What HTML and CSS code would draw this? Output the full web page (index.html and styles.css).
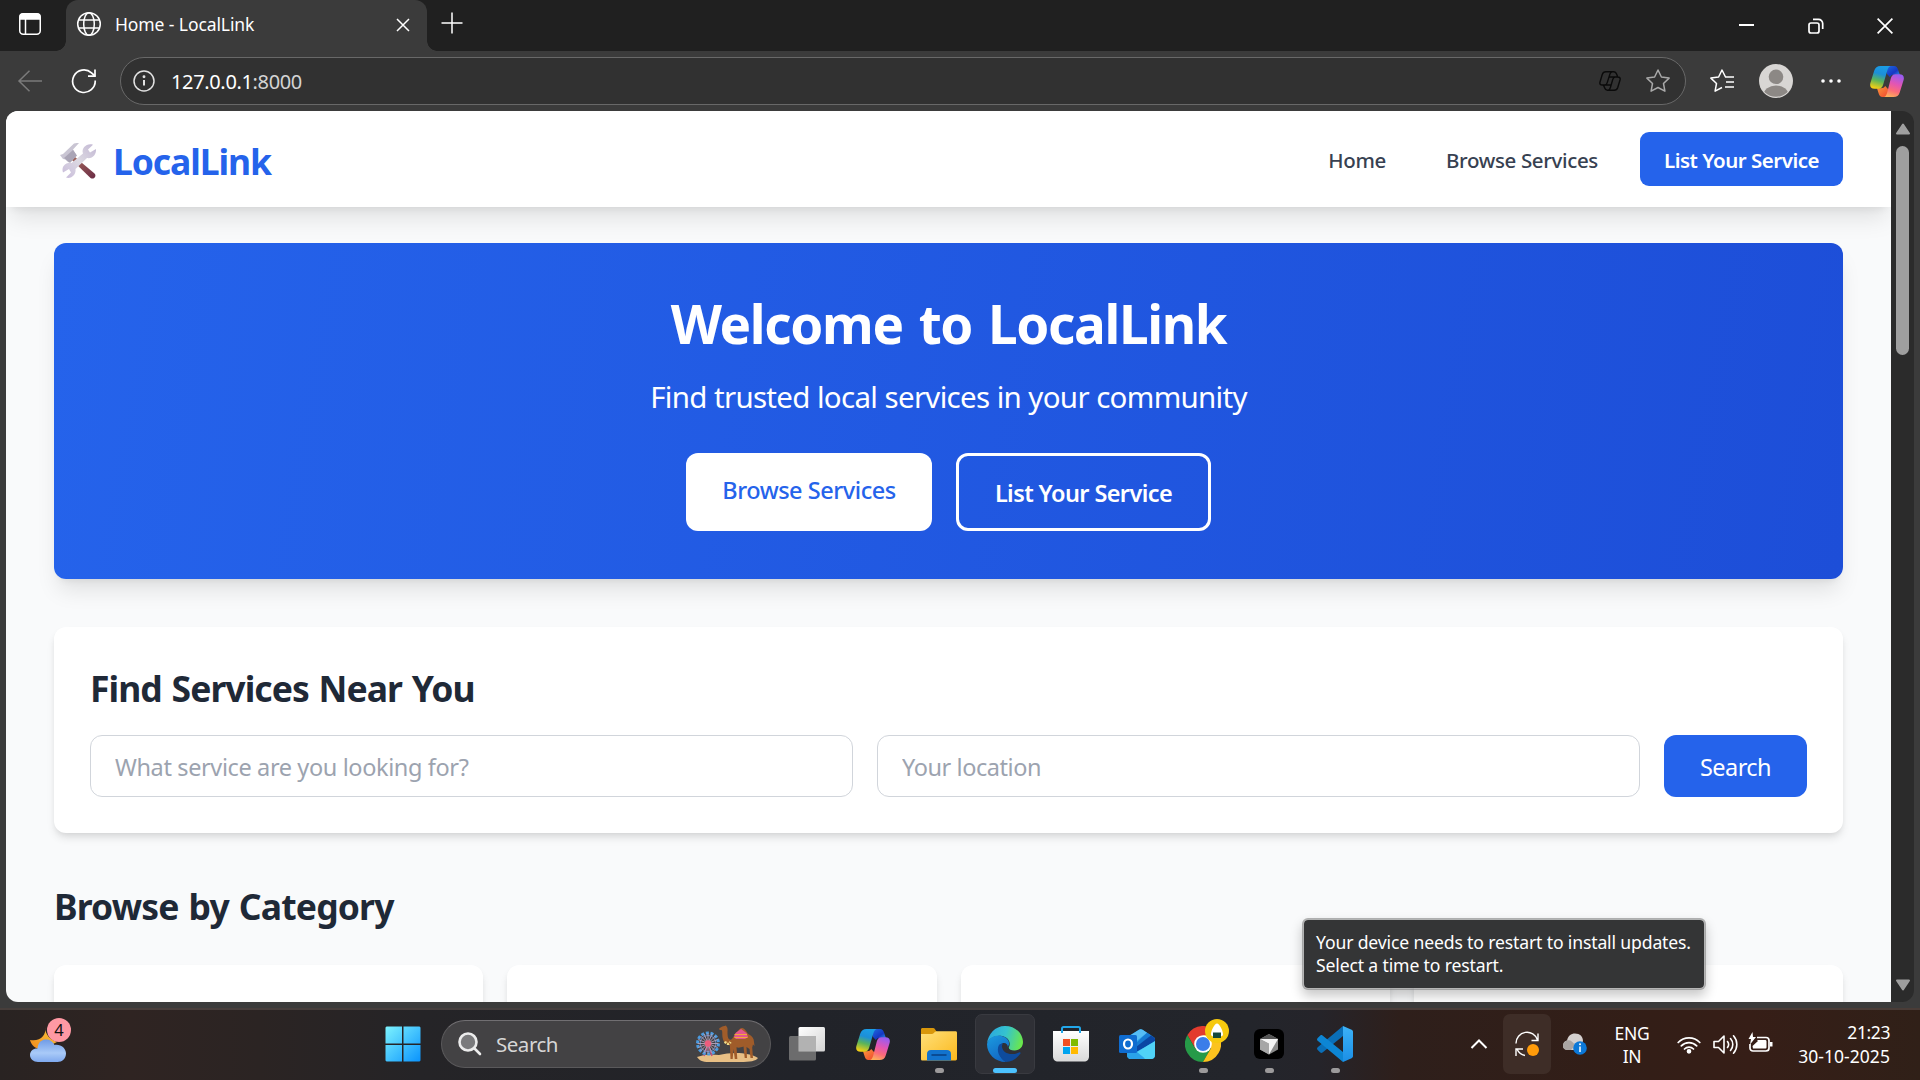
FILE: index.html
```html
<!DOCTYPE html>
<html lang="en">
<head>
<meta charset="utf-8">
<title>Home - LocalLink</title>
<link rel="stylesheet" href="styles.css">
</head>
<body>
<svg class="defs" width="0" height="0" aria-hidden="true">
  <defs>
    <linearGradient id="cpA" x1=".6" y1="0" x2=".35" y2="1"><stop offset="0" stop-color="#1b9de6"/><stop offset=".35" stop-color="#1c8fd8"/><stop offset=".65" stop-color="#5bb45a"/><stop offset="1" stop-color="#f3cf14"/></linearGradient>
    <linearGradient id="cpB" x1=".6" y1="0" x2=".3" y2="1"><stop offset="0" stop-color="#9a5cf0"/><stop offset=".4" stop-color="#e255b4"/><stop offset=".7" stop-color="#fb6b7a"/><stop offset="1" stop-color="#fcb05a"/></linearGradient>
    <linearGradient id="cpC" x1="0" y1="0" x2="1" y2="1"><stop offset="0" stop-color="#1f6fe0"/><stop offset=".6" stop-color="#1537c4"/><stop offset="1" stop-color="#35a6f2"/></linearGradient>
    <linearGradient id="cpD" x1="0" y1="0" x2="1" y2="1"><stop offset="0" stop-color="#fb9a3c"/><stop offset="1" stop-color="#f0442f"/></linearGradient>
    <symbol id="copilot" viewBox="0 0 34 31">
      <path fill="url(#cpC)" d="M15 0h9c2.200 0 3.400 1.500 4.200 4l1.600 4.700H24c-2 0-3.200.6-4.200 2.300L17 8z"/>
      <path fill="url(#cpD)" d="M19 31h-6.500c-2.200 0-3.200-1.500-4-4L7 22.200h4c2 0 3.200-.6 4.200-2.200L18 23z"/>
      <path fill="url(#cpA)" d="M10.500 0H20.500c-1.800.6-2.500 2.300-3.200 4.600L13.200 18.500c-.8 2.600-1.800 4.200-4.700 4.200H4.600C.9 22.700-.5 20.500.4 17L4.200 4.800C5.200 1.500 7.200 0 10.500 0z"/>
      <path fill="url(#cpB)" d="M23.500 31H14c1.800-.6 2.500-2.300 3.200-4.600L20.800 12.500c.8-2.600 1.800-4.200 4.700-4.200h3.900c3.700 0 5.100 2.200 4.200 5.700L29.800 26.200c-1 3.300-3 4.800-6.300 4.800z"/>
    </symbol>
    <linearGradient id="win" x1="0" y1="0" x2="1" y2="1"><stop offset="0" stop-color="#7df3fe"/><stop offset="1" stop-color="#0a93fd"/></linearGradient>
    <linearGradient id="cloud" x1="0" y1="0" x2="0" y2="1"><stop offset="0" stop-color="#6f9be6"/><stop offset=".6" stop-color="#a9caf8"/><stop offset="1" stop-color="#7fa9ee"/></linearGradient>
    <linearGradient id="moon" x1="1" y1="0" x2="0" y2="1"><stop offset="0" stop-color="#fbc93c"/><stop offset="1" stop-color="#f08a1c"/></linearGradient>
    <linearGradient id="folder" x1="0" y1="0" x2="1" y2="1"><stop offset="0" stop-color="#ffe07a"/><stop offset="1" stop-color="#fbb81c"/></linearGradient>
    <linearGradient id="edgeTop" x1="0" y1=".3" x2="1" y2=".5"><stop offset="0" stop-color="#2aa6e0"/><stop offset=".5" stop-color="#35c3cf"/><stop offset="1" stop-color="#6ae74c"/></linearGradient>
    <linearGradient id="edgeLeft" x1="0" y1="0" x2=".5" y2="1"><stop offset="0" stop-color="#1b9be0"/><stop offset="1" stop-color="#1268c4"/></linearGradient>
    <linearGradient id="bag" x1="0" y1="0" x2="0" y2="1"><stop offset="0" stop-color="#fff"/><stop offset="1" stop-color="#d9d9d9"/></linearGradient>
    <linearGradient id="grey" x1="0" y1="0" x2="1" y2="1"><stop offset="0" stop-color="#fff"/><stop offset="1" stop-color="#d3d3d3"/></linearGradient>
    <linearGradient id="wood" x1="0" y1="0" x2="1" y2="1"><stop offset="0" stop-color="#a4695c"/><stop offset="1" stop-color="#6b2b45"/></linearGradient>
    <linearGradient id="steel" x1="1" y1="0" x2="0" y2="1"><stop offset="0" stop-color="#c3b8d4"/><stop offset=".5" stop-color="#dcd9e2"/><stop offset="1" stop-color="#c8bbdb"/></linearGradient>
    <linearGradient id="vs" x1="0" y1="0" x2="0" y2="1"><stop offset="0" stop-color="#3db2f7"/><stop offset="1" stop-color="#1b8fe6"/></linearGradient>
  </defs>
</svg>

<div class="screen">
  <header class="titlebar">
    <svg class="tab-actions" width="24" height="24" viewBox="0 0 24 24" fill="none" stroke="#fff" stroke-width="1.5"><rect x="1.750" y="1.750" width="20.500" height="20.500" rx="3.500"/><path d="M2 4.500A2.500 2.500 0 0 1 4.500 2h15A2.500 2.500 0 0 1 22 4.500V7H2z" fill="#fff"/><path d="M7.500 7v15"/></svg>
    <div class="tab">
      <svg width="26" height="26" viewBox="0 0 26 26" fill="none" stroke="#fff" stroke-width="1.500"><circle cx="13" cy="13" r="11.300"/><ellipse cx="13" cy="13" rx="5.300" ry="11.300"/><path d="M2.700 9h20.600M2.700 17h20.600"/></svg>
      <span class="tab-title">Home - LocalLink</span>
      <svg class="tab-close" width="14" height="14" viewBox="0 0 14 14" stroke="#fff" stroke-width="1.500"><path d="M1 1l12 12M13 1L1 13"/></svg>
    </div>
    <svg class="new-tab" width="22" height="22" viewBox="0 0 22 22" stroke="#fff" stroke-width="1.500"><path d="M11 .5v21M.5 11h21"/></svg>
    <div class="window-controls">
      <svg width="16" height="16" viewBox="0 0 16 16" stroke="#fff" stroke-width="2"><path d="M0 7h15"/></svg>
      <svg width="16" height="16" viewBox="0 0 16 16" fill="none" stroke="#fff" stroke-width="1.700"><rect x="1" y="5" width="10" height="10" rx="2"/><path d="M5 1.300h5.500a4.200 4.200 0 0 1 4.200 4.200V11"/></svg>
      <svg width="16" height="16" viewBox="0 0 16 16" stroke="#fff" stroke-width="1.700"><path d="M.6.6l14.800 14.800M15.400.6L.6 15.400"/></svg>
    </div>
  </header>

  <div class="toolbar">
    <svg class="back" width="26" height="24" viewBox="0 0 26 24" fill="none" stroke="#7b7b7b" stroke-width="1.500"><path d="M25 12H2M12.500 1.800L2 12l10.500 10.200"/></svg>
    <svg class="reload" width="26" height="26" viewBox="0 0 26 26" fill="none" stroke="#fff" stroke-width="1.700"><path d="M24.200 12.500A11.300 11.300 0 1 1 20.500 4.800L24 8"/><path d="M24 1.500V8.200H17"/></svg>
    <div class="address">
      <svg width="24" height="24" viewBox="0 0 24 24" fill="none" stroke="#e2e2e2" stroke-width="1.500"><circle cx="12" cy="12" r="10"/><path d="M12 11v5.500" stroke-width="2"/><circle cx="12" cy="7.700" r=".7"/></svg>
      <span class="url"><b>127.0.0.1</b>:8000</span>
      <svg class="address-copilot" width="22" height="20" viewBox="0 0 34 31" fill="none" stroke="#0a0a0a" stroke-width="2.200" stroke-linejoin="round"><path d="M10.500 1.200H23c2.200 0 3.400 1.300 4.200 3.500l1.500 4M23.500 29.800H13c-2.200 0-3.400-1.300-4.200-3.500L7 22M10.500 1.200C7.500 1.200 6 2.500 5 5.500L1.500 17c-.8 3 .5 4.800 3.500 4.800h4c2.200 0 3-1.500 3.700-3.800L17 4.500c.6-2 1.500-3.300 3.500-3.300M23.500 29.800c3 0 4.500-1.300 5.500-4.300L32.500 14c.8-3-.5-4.800-3.500-4.800h-4c-2.200 0-3 1.500-3.700 3.800L17.500 26c-.6 2-1.500 3.800-3.500 3.800M15.500 9.200h9M9.500 21.800h9"/></svg>
      <svg width="26" height="26" viewBox="0 0 26 26" fill="none" stroke="#a9a9a9" stroke-width="1.500" stroke-linejoin="round"><path d="M13 2l3.400 7 7.700 1.100-5.600 5.400 1.400 7.700-6.900-3.700-6.900 3.700 1.400-7.700L1.900 10.100 9.600 9z"/></svg>
    </div>
    <svg class="favorites" width="26" height="26" viewBox="0 0 26 26" fill="none" stroke="#fff" stroke-width="1.500" stroke-linejoin="round"><path d="M16.500 9L13 2 9.600 9 1.900 10.100l5.600 5.400-1.400 7.700 6.900-3.700M16 9h9M17 14h8M16 19h9"/></svg>
    <svg class="avatar" width="34" height="34" viewBox="0 0 34 34"><clipPath id="av"><circle cx="17" cy="17" r="15.800"/></clipPath><circle cx="17" cy="17" r="17" fill="#d8d6d4"/><g clip-path="url(#av)" fill="#8c8885"><circle cx="17" cy="12.800" r="7.300"/><ellipse cx="17" cy="31" rx="12.500" ry="9.500"/></g></svg>
    <svg class="more" width="20" height="6" viewBox="0 0 20 6" fill="#fff"><circle cx="2" cy="3" r="1.800"/><circle cx="10" cy="3" r="1.800"/><circle cx="18" cy="3" r="1.800"/></svg>
    <svg class="sidebar-copilot" width="34" height="31"><use href="#copilot"/></svg>
  </div>

  <div class="viewport">
    <div class="page">
      <nav class="site-nav">
        <a class="brand">
          <svg width="38" height="38" viewBox="0 0 38 38">
            <path d="M16 15l19.500 16.500c2.500 2.500-.5 6.500-4 4.500L13 18z" fill="url(#wood)"/>
            <path d="M1 13l3-1L15 1.500c2-1 3.500-.5 5-.5l-6 6.500 2.500 4-7 9-3-3-2.500-.5z" fill="#c9c5d3"/>
            <path d="M5 16l9-8 4 5.500-7 7.500z" fill="#aaa5b6"/>
            <path d="M34 2.700L29 7.500l2 3 6-3.500c.5 5.500-3.500 10-9 9L16.500 27c1 5.500-4.500 10.500-9.500 8.500l5-5-2-3.500-6 3.500c-2-5.500 2.500-10.500 8.500-9.500L24 11.500C22 6 28 .7 34 2.700z" fill="url(#steel)"/>
          </svg>
          <span>LocalLink</span>
        </a>
        <div class="nav-links">
          <a class="nav-link home">Home</a>
          <a class="nav-link">Browse Services</a>
          <a class="nav-cta">List Your Service</a>
        </div>
      </nav>

      <main class="content">
        <section class="hero">
          <h1>Welcome to LocalLink</h1>
          <p>Find trusted local services in your community</p>
          <div class="hero-actions">
            <a class="btn-solid">Browse Services</a>
            <a class="btn-outline">List Your Service</a>
          </div>
        </section>

        <section class="search-card">
          <h2>Find Services Near You</h2>
          <form class="search-form">
            <input class="service-input" type="text" placeholder="What service are you looking for?">
            <input class="location-input" type="text" placeholder="Your location">
            <button type="button">Search</button>
          </form>
        </section>

        <section class="categories">
          <h2>Browse by Category</h2>
          <div class="category-grid">
            <div class="category"></div><div class="category"></div><div class="category"></div><div class="category"></div>
          </div>
        </section>
      </main>
    </div>
    <div class="scrollbar">
      <svg width="16" height="12" viewBox="0 0 16 12" fill="#9f9f9f" stroke="#9f9f9f" stroke-width="2" stroke-linejoin="round"><path d="M8 1.500l6 9H2z"/></svg>
      <div class="thumb"></div>
      <svg class="arrow-down" width="16" height="12" viewBox="0 0 16 12" fill="#9f9f9f" stroke="#9f9f9f" stroke-width="2" stroke-linejoin="round"><path d="M8 10.500l6-9H2z"/></svg>
    </div>
  </div>

  <footer class="taskbar">
    <div class="weather">
      <svg width="36" height="36" viewBox="0 0 36 36"><path d="M15 1c2 8-5 15-15 13 2 7 8 11 15 8l12-6C20 14 15 8 15 1z" fill="url(#moon)"/><path d="M7.500 22.500C8 16 12 13.500 16 13.500s7 2 8.500 5.500C31 18 36 22.500 36 27.500S32 36 27.500 36H8c-4.500 0-8-3-8-7s3.500-6.800 7.500-6.500z" fill="url(#cloud)"/></svg>
      <span class="badge">4</span>
    </div>
    <div class="slot start">
      <svg width="36" height="36" viewBox="0 0 36 36"><path fill="url(#win)" d="M1.500.5H17v17H.5v-16zM18.500.5h16l1 1v16h-17zM.5 19H17v16.500H1.500l-1-1zM18.500 19h17v15.500l-1 1h-16z"/></svg>
    </div>
    <div class="search-pill">
      <svg width="24" height="24" viewBox="0 0 24 24" fill="#7a7a7c" stroke="#ececec" stroke-width="2.600" stroke-linecap="round"><circle cx="10" cy="10" r="8.500"/><path d="M16.500 16.500L22 22"/></svg>
      <span>Search</span>
      <svg class="search-art" width="64" height="38" viewBox="0 0 64 38">
        <path d="M2 32c8-3 14-3 22-2 12-3 30-3 39 3-2 3-8 4-18 4H14C7 37 4 35 2 32z" fill="#e8bf85"/>
        <path d="M9 31l4-12 4 12" fill="none" stroke="#c84f7c" stroke-width="1.500"/>
        <circle cx="13" cy="18.500" r="10.500" fill="none" stroke="#4b9be0" stroke-width="3" stroke-dasharray="3 1.700"/>
        <circle cx="13" cy="18.500" r="8" fill="none" stroke="#6f8fc8" stroke-width="1"/>
        <path d="M13 8v21M2.500 18.500h21M5.600 11l14.800 15M20.400 11L5.600 26M9 8.800l8 19.400M17 8.800L9 28.200M3.300 14.500l19.400 8M22.700 14.500l-19.400 8" stroke="#b9a5bd" stroke-width=".9"/>
        <circle cx="13" cy="18.500" r="3.200" fill="#ee5c7c"/>
        <path d="M24.500 3.200c1.500-1 3-2.200 5-2.200l1.500-.6.500 1c1.200 1 1.200 3 1 5.500 0 4 .3 7.500 3 7.800 2.500-.5 3-4 5-6.200 2-1.500 3.500-5 6.500-5.500 3 0 4.500 4.500 7 6.500 3 1.500 5 4 5 7.500l.5 4-1.500-1.500-.8 3 .8 10.500h-2.500l-1-9-3-2 .5 11h-2.300l-1.200-11.500c-3 1.200-5 1.400-7 .8l.8 11.700h-2.500l-1.300-10-.8 10h-2.200l-.6-13.500c-5-1.500-7-4.500-7.500-9-.3-3 .3-5.500-.9-6.500-1 0-2.200.2-2.500-1z" fill="#a05c2a"/>
        <path d="M40.500 8l5.500-4 5.500 4 1.500 4-3 2H41l-2-2z" fill="#e4568d"/><path d="M39.500 9.500h12.500M39.500 12.500h13" stroke="#f3a83a" stroke-width="1.200"/>
        <path d="M30 16.500c1.500 3 4 3 5.500.5" stroke="#f0e08a" stroke-width="2.500" stroke-dasharray="2 1" fill="none"/>
      </svg>
    </div>
    <div class="apps">
      <div class="slot"><svg width="36" height="36" viewBox="0 0 36 36"><rect x="9.500" y="1" width="26.500" height="24.500" rx="1.500" fill="url(#grey)"/><rect y="10" width="27" height="24.500" rx="1.500" fill="#747474" opacity=".9"/><path d="M9.500 10H27v15.500H9.500z" fill="#b2b2b2"/></svg></div>
      <div class="slot"><svg width="34" height="31"><use href="#copilot"/></svg></div>
      <div class="slot running"><svg width="36" height="36" viewBox="0 0 36 36"><path d="M0 8V3.500C0 2.500.7 2 1.500 2H12c2 0 2 2 4 4l-4 3z" fill="#d9970b"/><path d="M0 8h11c2 0 2.500-2.700 4.500-2.700h19c1 0 1.500.7 1.500 1.500v26c0 1-.6 1.700-1.500 1.700h-33C.7 34.500 0 34 0 33z" fill="url(#folder)"/><path d="M6 34.500V28c0-2.500 1.500-4 4-4h16c2.500 0 4 1.500 4 4v6.500z" fill="#1273cd"/><path d="M11 29h14" stroke="#083f80" stroke-width="1.500" stroke-linecap="round"/></svg></div>
      <div class="slot active"><svg width="36" height="36" viewBox="0 0 36 36"><path d="M0 18C1 8 8 0 18 0c11 0 18 8 18 16 0 5.500-4 8.500-8.500 8.500-4 0-6.500-1.500-5.500-3.500 2-4 0-9.500-7-11C8 9 2 12 0 18z" fill="url(#edgeTop)"/><path d="M0 18C2 11 9 8.500 14.500 10c5 1 8.200 4.500 7.500 8.500-.3 1-1 1.500-1 3 0-3.500-3-5.500-6-4-5 3-4.500 13 4 18.500C8 36 0 28 0 18z" fill="url(#edgeLeft)"/><path d="M12 19c-3 5 0 13 7 17 6 0 11-3.500 14.500-8.500.5-1-.5-1.500-1.500-1-8 3.500-16 1-17-5.500-.2-1.500.5-3 1-3.500-1.700 0-3 .5-4 1.500z" fill="#0e4b9c"/></svg></div>
      <div class="slot"><svg width="36" height="36" viewBox="0 0 36 36"><path d="M0 5h36v25.500c0 3-2 5-5 5H5c-3 0-5-2-5-5z" fill="url(#bag)"/><path d="M9 7V2.500C9 1.600 9.600 1 10.500 1h15c.9 0 1.500.6 1.500 1.500V7" fill="none" stroke="#22a7ea" stroke-width="2"/><path d="M10 13h7v7h-7z" fill="#f25022"/><path d="M18 13h7v7h-7z" fill="#7fba00"/><path d="M10 21h7v7h-7z" fill="#00a4ef"/><path d="M18 21h7v7h-7z" fill="#ffb900"/></svg></div>
      <div class="slot"><svg width="36" height="30" viewBox="0 0 36 30"><path d="M8 8L20 .8c1-.8 2.500-.8 3.500 0L34.500 8c1 .7 1.500 1.300 1.500 2.500V26c0 2.500-1.500 4-4 4H12c-2.500 0-4-1.500-4-4z" fill="#2b9fe8"/><path d="M9 8L20 .8c1-.8 2.500-.8 3.500 0L28 3.700 15 14z" fill="#55bdf5"/><path d="M16 15L28 3.700l4 2.600L17 19z" fill="#1679d2"/><path d="M17 18L32 6.300l2.500 1.700c1 .7 1.500 1.300 1.500 2.500v2L18 22.500z" fill="#0a46a4"/><path d="M9 28.500L36 12v14c0 2.500-1.500 4-4 4H12c-1.200 0-2.300-.6-3-1.500z" fill="#50d3f7"/><path d="M8 23h10l8 6.500c-1 .5-2 .5-3 .5H12c-2.500 0-4-1.500-4-4z" fill="#2aa3ea"/><rect y="6" width="18" height="18" rx="1.500" fill="#0f6cd0"/><ellipse cx="9" cy="15" rx="4" ry="4.500" fill="none" stroke="#fff" stroke-width="2.200"/></svg></div>
      <div class="slot running chrome">
        <svg width="36" height="36" viewBox="0 0 36 36"><path d="M2.400 9A18 18 0 0 1 33.600 9H18l-7.800 13.500z" fill="#e33b2e"/><path d="M2.400 9A18 18 0 0 0 18 36l7.800-13.500H10.200z" fill="#269a48"/><path d="M33.600 9A18 18 0 0 1 18 36l7.800-13.500L18 9z" fill="#fcc31e"/><circle cx="18" cy="18" r="8.800" fill="#fff"/><circle cx="18" cy="18" r="7" fill="#3b7de9"/></svg>
        <svg class="profile-badge" width="24" height="24" viewBox="0 0 24 24"><circle cx="12" cy="12" r="12" fill="#f6c90e"/><path d="M12 4.500c2.500 0 6.500 8 6 11.500-.3 2.500-11.700 2.500-12 0-.5-3.500 3.500-11.500 6-11.500z" fill="#fff"/><path d="M8 13.500h8V19H8z" fill="#174a3c"/></svg>
      </div>
      <div class="slot running"><svg width="30" height="30" viewBox="0 0 30 30"><rect width="30" height="30" rx="6" fill="#000"/><path d="M15 5l9 5v10.500L15 25.500 6 20.500V10z" fill="#8a8a8a"/><path d="M6 10l9-5 9 5z" fill="#555"/><path d="M6 10h18l-9 15.500V15z" fill="#f4f4f4"/><path d="M6 10l9 4.500v11L6 20.500z" fill="#a6a6a6"/></svg></div>
      <div class="slot running"><svg width="36" height="36" viewBox="0 0 36 36"><path d="M26 0v10L5.500 26.500c-.8.6-1.500.5-2.200 0L.7 24c-.9-.8-.9-2 0-2.800z" fill="#0a6fb8"/><path d="M26 36V26L5.500 9.500c-.8-.6-1.500-.5-2.200 0L.7 12c-.9.800-.9 2 0 2.800z" fill="#0d86d4"/><path d="M26 0l8.600 3.800c.9.400 1.400 1.200 1.400 2.200v24c0 1-.5 1.800-1.400 2.200L26 36z" fill="url(#vs)"/></svg></div>
    </div>
    <div class="tray">
      <svg class="chevron" width="18" height="12" viewBox="0 0 18 12" fill="none" stroke="#fff" stroke-width="2"><path d="M1.500 10L9 2.500l7.500 7.500"/></svg>
      <div class="update"><svg width="26" height="26" viewBox="0 0 26 26" fill="none" stroke="#fff" stroke-width="1.400"><path d="M2 12.500A11 11 0 0 1 23.500 9M24 2.500V9.500H17.500M11 24.500A11 11 0 0 1 3 18M2 25V18h7"/><circle cx="19" cy="19" r="6" fill="#ff9b0a" stroke="none"/></svg></div>
      <svg class="cloud" width="24" height="22" viewBox="0 0 24 22"><path d="M0 13c0-3 1.500-5 4-5.500C5 3 8 .5 12 .5c5 0 8 3 8 7.500L17 17H5c-3 0-5-1.500-5-4z" fill="#d4d0cf"/><path d="M4 7.500c3-1 6 1 8 5L8 17H5c-3 0-5-1.500-5-4s1.500-5 4-5.500z" fill="#aaa5a3"/><circle cx="17" cy="15" r="6.800" fill="#0b78d8"/><path d="M17 13.500V19" stroke="#fff" stroke-width="1.500"/><circle cx="17" cy="11.300" r="1" fill="#fff"/></svg>
      <div class="lang">ENG<br>IN</div>
      <svg class="wifi" width="24" height="19" viewBox="0 0 24 19" fill="none" stroke="#fff" stroke-width="1.700" stroke-linecap="round"><path d="M1.200 7.500a15 15 0 0 1 21.600 0M4.300 10.800a10.700 10.700 0 0 1 15.400 0M7.500 14a6.300 6.300 0 0 1 9 0"/><circle cx="12" cy="16.300" r="1.500" fill="#fff"/></svg>
      <svg class="volume" width="25" height="21" viewBox="0 0 25 21" fill="none" stroke="#fff" stroke-width="1.600" stroke-linejoin="round" stroke-linecap="round"><path d="M1 7.500h4.500L11 2v17l-5.500-5.500H1zM14.500 7.500a5 5 0 0 1 0 6M17.500 4.500a9 9 0 0 1 0 12M20.500 1.800a13 13 0 0 1 0 17.400"/></svg>
      <svg class="battery" width="25" height="21" viewBox="0 0 25 21" fill="none" stroke="#fff" stroke-width="1.700"><path d="M9 5.500h9c1.800 0 3 1.200 3 3v7.500c0 1.800-1.200 3-3 3H5c-1.800 0-3-1.200-3-3v-4"/><path d="M9 8h8c1 0 1.500.5 1.500 1.500v5.500c0 1-.5 1.500-1.500 1.500H5L4.500 14l5.500-5z" fill="#fff" stroke="none"/><path d="M22 10h2.500v4.500H22z" fill="#fff" stroke="none"/><path d="M4.500 0L.5 7H3l-1 5.500L8 5H5z" fill="#fff" stroke="none"/></svg>
      <div class="clock">21:23<br><span>30-10-2025</span></div>
    </div>
  </footer>

  <div class="tooltip">Your device needs to restart to install updates.<br>Select a time to restart.</div>
</div>
</body>
</html>
```
FILE: styles.css
```css
* { box-sizing: border-box; }
body { margin: 0; font-family: "Noto Sans", "Open Sans", sans-serif; overflow: hidden; }
svg { display: block; flex: none; }
.defs { position: absolute; }
h1, h2, p { margin: 0; }

.screen {
  position: relative;
  width: 1920px; height: 1080px;
  display: flex; flex-direction: column;
  background: #3b3b3b;
}

/* Browser title bar */
.titlebar { height: 51px; flex: none; background: #202020; display: flex; align-items: flex-start; }
.tab-actions { margin: 12px 0 0 18px; }
.tab {
  position: relative;
  width: 361px; height: 51px; margin-left: 24px; padding: 0 17px 3px 10px;
  display: flex; align-items: center;
  background: #3b3b3b; border-radius: 12px 12px 0 0; color: #fff;
}
.tab::before, .tab::after {
  content: ""; position: absolute; bottom: 0; width: 10px; height: 10px;
}
.tab::before { left: -10px; background: radial-gradient(circle at 0 0, transparent 9.500px, #3b3b3b 10px); }
.tab::after { right: -10px; background: radial-gradient(circle at 100% 0, transparent 9.500px, #3b3b3b 10px); }
.tab-title { margin-left: 13px; padding-bottom: 1px; font-size: 17.500px; letter-spacing: -.1px; line-height: 24px; }
.tab-close { margin: 1px 0 0 auto; }
.new-tab { margin: 12px 0 0 14px; }
.window-controls { margin: 18px 27px 0 auto; display: flex; gap: 53px; }

/* Browser toolbar */
.toolbar { height: 60px; flex: none; display: flex; align-items: center; padding-left: 17px; }
.reload { margin-left: 28px; }
.address {
  width: 1566px; height: 48px; margin: 0 0 0 23px; padding: 0 14px 0 11px;
  display: flex; align-items: center;
  background: #313131; border: 1.500px solid #686868; border-radius: 24px;
}
.url { margin-left: 15px; font-size: 20px; letter-spacing: -.35px; color: #d4d4d4; }
.url b { font-weight: 400; color: #fff; }
.address-copilot { margin: 0 24px 0 auto; }
.favorites { margin-left: 23px; }
.avatar { margin-left: 24px; }
.more { margin-left: 28px; }
.sidebar-copilot { margin-left: 29px; }

/* Web page */
.viewport { height: 891px; margin: 0 6px; flex: none; display: flex; border-radius: 12px; overflow: hidden; }
.page { width: 1885px; height: 891px; flex: none; overflow: hidden; background: #f9fafb; }
.site-nav {
  height: 96px; padding: 0 48px; background: #fff;
  display: flex; align-items: center; justify-content: space-between;
  box-shadow: 0 15px 22.500px -4.500px rgba(0,0,0,.1), 0 6px 9px -6px rgba(0,0,0,.1);
}
.brand {
  display: flex; align-items: center; gap: 16px; padding-left: 5px;
  font-size: 35.500px; font-weight: 700; letter-spacing: -1.100px; line-height: 48px; color: #2563eb;
}
.brand svg { margin-top: 4px; }
.brand span { padding-top: 3px; }
.nav-links { display: flex; align-items: center; font-size: 20.500px; font-weight: 500; color: #374151; line-height: 30px; }
.home { margin-right: 60px; }
.nav-link { letter-spacing: -.35px; padding-top: 1px; }
.nav-cta {
  width: 203px; height: 54px; padding-top: 1px; margin-left: 42px; line-height: 54px; text-align: center; white-space: nowrap;
  background: #2563eb; color: #fff; border-radius: 9px; font-weight: 600; letter-spacing: -.5px;
}
.content { padding: 36px 48px; }

.hero {
  height: 336px; padding: 48px; border-radius: 12px; color: #fff; text-align: center;
  background: linear-gradient(100deg, #2563eb, #1d4ed8);
  box-shadow: 0 15px 22.500px -4.500px rgba(0,0,0,.1), 0 6px 9px -6px rgba(0,0,0,.1);
}
.hero h1 { height: 60px; line-height: 65px; font-size: 53px; font-weight: 700; letter-spacing: -1.350px; word-spacing: 3.500px; }
.hero p { height: 42px; margin-top: 24px; line-height: 44px; font-size: 29.500px; letter-spacing: -.7px; word-spacing: .3px; }
.hero-actions { margin-top: 36px; display: flex; justify-content: center; gap: 24px; font-size: 23.500px; font-weight: 500; letter-spacing: -.45px; line-height: 38px; white-space: nowrap; }
.btn-solid { width: 246px; height: 78px; padding-top: 18px; background: #fff; color: #2563eb; border-radius: 12px; }
.btn-outline { width: 255px; height: 78px; padding-top: 18px; border: 3px solid #fff; border-radius: 12px; font-weight: 600; letter-spacing: -.6px; }

.search-card {
  height: 206px; margin-top: 48px; padding: 36px; background: #fff; border-radius: 12px;
  box-shadow: 0 6px 9px -1.500px rgba(0,0,0,.1), 0 3px 6px -3px rgba(0,0,0,.1);
}
h2 { height: 48px; line-height: 51px; font-size: 35.500px; font-weight: 700; letter-spacing: -.95px; word-spacing: 1.500px; color: #1f2937; }
.search-form { margin-top: 24px; display: flex; gap: 24px; }
.search-form input {
  flex: 1; min-width: 0; height: 62px; padding: 2px 24px 0; border: 1.500px solid #d1d5db; border-radius: 12px;
  background: #fff; font-family: inherit; font-size: 23.500px; letter-spacing: -.38px;
}
.search-form input::placeholder { color: #9ca3af; opacity: 1; }
.search-form .location-input { letter-spacing: -.43px; }
.search-form button {
  width: 143px; height: 62px; padding: 2px 0 0; border: 0; border-radius: 12px; background: #2563eb; color: #fff;
  font-family: inherit; font-size: 23.500px; letter-spacing: -.55px;
}
.categories { margin-top: 48px; }
.categories h2 { letter-spacing: -.83px; }
.category-grid { margin-top: 36px; display: grid; grid-template-columns: repeat(4, 1fr); gap: 24px; }
.category { height: 180px; background: #fff; border-radius: 12px; box-shadow: 0 6px 9px -1.500px rgba(0,0,0,.1), 0 3px 6px -3px rgba(0,0,0,.1); }

.scrollbar { width: 23px; flex: none; background: #2b2b2b; display: flex; flex-direction: column; align-items: center; padding: 12px 0 11px; }
.thumb { width: 13px; height: 209px; margin-top: 11px; border-radius: 7px; background: #9f9f9f; }
.arrow-down { margin-top: auto; }

/* Taskbar */
.taskbar {
  height: 72px; margin-top: auto; flex: none; padding: 0 0 2px 30px;
  display: flex; align-items: center; color: #fff;
  border-top: 2px solid rgba(92,80,76,.6);
  background: linear-gradient(90deg, #292322 0, #2f2422 130px, #2b2423 260px, #252427 420px, #212329 800px, #23252b 1250px, #25242a 1320px, #2e1f1b 1400px, #331e17 1650px, #361e17 1750px, #302018 1920px);
}
.weather { position: relative; width: 36px; }
.badge {
  position: absolute; left: 17px; top: -8px; width: 24px; height: 24px; border-radius: 50%;
  background: #ff99a4; color: #111; font-size: 16.500px; line-height: 24px; text-align: center;
}
.slot { position: relative; width: 66px; height: 60px; display: flex; align-items: center; justify-content: center; }
.start { margin-left: 304px; }
.search-pill {
  width: 330px; height: 48px; margin: 0 3px 0 5px; padding: 0 11px 0 16px; display: flex; align-items: center;
  background: #434244; border: 1.500px solid #5a595b; border-top-color: #716f72; border-radius: 24px;
}
.search-pill span { margin: 0 auto 0 14px; font-size: 20.500px; letter-spacing: -.48px; color: #d6d6d6; }
.apps { display: flex; }
.running::after { content: ""; position: absolute; bottom: 1px; left: 28.500px; width: 9px; height: 5px; border-radius: 3px; background: #9c9a9b; }
.active { width: 60px; margin: 0 3px; background: #2f3036; border: 1.500px solid #393a40; border-radius: 7px; }
.active::after { content: ""; position: absolute; bottom: 0; left: 17px; width: 24px; height: 5px; border-radius: 3px; background: #4cc2ff; }
.profile-badge { position: absolute; left: 35px; top: 5px; }
.tray { display: flex; align-items: center; margin-left: 102px; font-size: 17.500px; line-height: 23px; }
.update { width: 48px; height: 60px; margin: 0 12px 0 15px; display: flex; align-items: center; justify-content: center; background: #3e2d27; border-radius: 7px; }
.lang { width: 60px; margin-left: 15px; padding-top: 1px; text-align: center; letter-spacing: -.3px; line-height: 22.500px; }
.wifi { margin-left: 15px; }
.volume { margin-left: 12px; }
.battery { margin: -3px 0 0 10px; }
.clock { width: 117px; text-align: right; line-height: 24px; letter-spacing: -.4px; }
.clock span { letter-spacing: .05px; }

.tooltip {
  position: absolute; left: 1302px; top: 918px; width: 404px; height: 72px; padding: 11px 12px; white-space: nowrap;
  background: #343536; background-clip: padding-box; border: 2px solid rgba(120,120,120,.55); border-radius: 6px;
  box-shadow: 0 6px 12px rgba(0,0,0,.22); color: #fff; font-size: 17.600px; line-height: 23px; letter-spacing: -.15px;
}
```
